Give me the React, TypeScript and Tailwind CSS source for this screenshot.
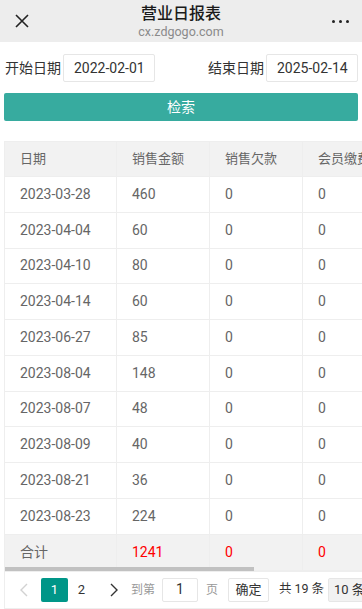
import React from 'react';

const rows = [
    { date: '2023-03-28', amount: '460' },
    { date: '2023-04-04', amount: '60' },
    { date: '2023-04-10', amount: '80' },
    { date: '2023-04-14', amount: '60' },
    { date: '2023-06-27', amount: '85' },
    { date: '2023-08-04', amount: '148' },
    { date: '2023-08-07', amount: '48' },
    { date: '2023-08-09', amount: '40' },
    { date: '2023-08-21', amount: '36' },
    { date: '2023-08-23', amount: '224' },
];

const font = { fontFamily: 'Roboto, "Noto Sans CJK SC", sans-serif' };

const Cell: React.FC<{ w: string; children?: React.ReactNode; className?: string }> = ({ w, children, className }) => (
    <div className={`${w} shrink-0 h-full flex items-center px-[15px] border-r border-[#eee] whitespace-nowrap overflow-hidden ${className ?? ''}`}>
        {children}
    </div>
);

const Row: React.FC<{ cells: string[]; bg?: string; h: string; red?: boolean; head?: boolean }> = ({ cells, bg, h, red, head }) => (
    <div className={`flex ${h} border-b border-[#eee] ${bg ?? 'bg-white'} ${head ? 'text-[13px]' : 'text-[14px]'} text-[#666]`}>
        <Cell w="w-[112px]">{cells[0]}</Cell>
        <Cell w="w-[93px]" className={red ? 'text-[#ff0000]' : ''}>{cells[1]}</Cell>
        <Cell w="w-[93px]" className={red ? 'text-[#ff0000]' : ''}>{cells[2]}</Cell>
        <Cell w="w-[93px]" className={red ? 'text-[#ff0000]' : ''}>{cells[3]}</Cell>
    </div>
);

const Chevron: React.FC<{ dir: 'left' | 'right'; color: string }> = ({ dir, color }) => (
    <svg width="10" height="14" viewBox="0 0 10 14" fill="none">
        <path d={dir === 'left' ? 'M8 1L2 7l6 6' : 'M2 1l6 6-6 6'} stroke={color} strokeWidth="1.4" />
    </svg>
);

export default function App() {
    return (
        <div className="w-[362px] h-[609px] overflow-hidden bg-white" style={font}>
            <div className="h-[42px] bg-[#ededed] flex items-center relative">
                <div className="w-[42px] flex justify-center pl-[1px]">
                    <svg width="14" height="14" viewBox="0 0 14 14">
                        <path d="M1 1l12 12M13 1L1 13" stroke="#222" strokeWidth="1.6" />
                    </svg>
                </div>
                <div className="flex-1 flex flex-col items-center pt-[1px]">
                    <div className="text-[16px] leading-[20px] text-[#1a1a1a] font-medium">营业日报表</div>
                    <div className="text-[12.5px] leading-[16px] text-[#8a8a8a]">cx.zdgogo.com</div>
                </div>
                <div className="w-[42px] flex justify-center gap-[4px] pr-[2px]">
                    <span className="w-[3px] h-[3px] bg-[#222] rounded-full" />
                    <span className="w-[3px] h-[3px] bg-[#222] rounded-full" />
                    <span className="w-[3px] h-[3px] bg-[#222] rounded-full" />
                </div>
            </div>

            <div className="px-[4px]">
                <div className="flex items-center justify-between mt-[12px] h-[28px]">
                    <div className="flex items-center">
                        <span className="text-[14px] text-[#333] pl-[1px] w-[59px]">开始日期</span>
                        <div className="w-[92px] h-[28px] border border-[#e6e6e6] rounded-[2px] flex items-center pl-[10px] text-[14px] text-[#333]">2022-02-01</div>
                    </div>
                    <div className="flex items-center">
                        <span className="text-[14px] text-[#333] w-[58px]">结束日期</span>
                        <div className="w-[92px] h-[28px] border border-[#e6e6e6] rounded-[2px] flex items-center pl-[10px] text-[14px] text-[#333]">2025-02-14</div>
                    </div>
                </div>
                <div className="mt-[11px] h-[28px] bg-[#37ab9f] rounded-[2px] flex items-center justify-center text-white text-[14px]">检索</div>

                <div className="mt-[20px] border border-[#eee] border-r-0 w-[400px]">
                    <div className="relative overflow-hidden">
                        <Row head h="h-[35px]" bg="bg-[#f2f2f2]" cells={['日期', '销售金额', '销售欠款', '会员缴费']} />
                        {rows.map(r => (
                            <Row key={r.date} h="h-[35.75px]" cells={[r.date, r.amount, '0', '0']} />
                        ))}
                        <Row h="h-[36px]" bg="bg-[#f2f2f2]" red cells={['合计', '1241', '0', '0']} />
                        <div className="absolute left-0 bottom-0 w-[249px] h-[4px] bg-[#c1c1c1]" />
                    </div>
                    <div className="h-[37px] flex items-center text-[13px] text-[#333] border-t border-[#eee]">
                        <div className="ml-[5px] w-[27px] h-[24px] flex items-center justify-center"><Chevron dir="left" color="#d2d2d2" /></div>
                        <div className="ml-[4px] w-[27px] h-[24px] bg-[#009688] rounded-[2px] text-white flex items-center justify-center">1</div>
                        <div className="w-[27px] h-[24px] flex items-center justify-center">2</div>
                        <div className="ml-[5px] w-[27px] h-[24px] flex items-center justify-center"><Chevron dir="right" color="#333" /></div>
                        <span className="ml-[4px] text-[12px] text-[#999] w-[27px]">到第</span>
                        <div className="ml-[4px] w-[36px] h-[24px] border border-[#e6e6e6] rounded-[2px] flex items-center justify-center text-[14px]">1</div>
                        <span className="ml-[8px] text-[12px] text-[#999] w-[12px]">页</span>
                        <div className="ml-[10px] w-[41px] h-[24px] border border-[#e6e6e6] rounded-[2px] flex items-center justify-center text-[13px]">确定</div>
                        <span className="ml-[10px] w-[40px] text-[12.5px] text-[#333] whitespace-nowrap flex gap-[3px]"><span>共</span><span>19</span><span>条</span></span>
                        <div className="ml-[9px] w-[60px] h-[24px] border border-[#e6e6e6] rounded-[2px] bg-[#f2f2f2] flex items-center pl-[5px] text-[13px]">10 条/页</div>
                    </div>
                </div>
            </div>
        </div>
    );
}
